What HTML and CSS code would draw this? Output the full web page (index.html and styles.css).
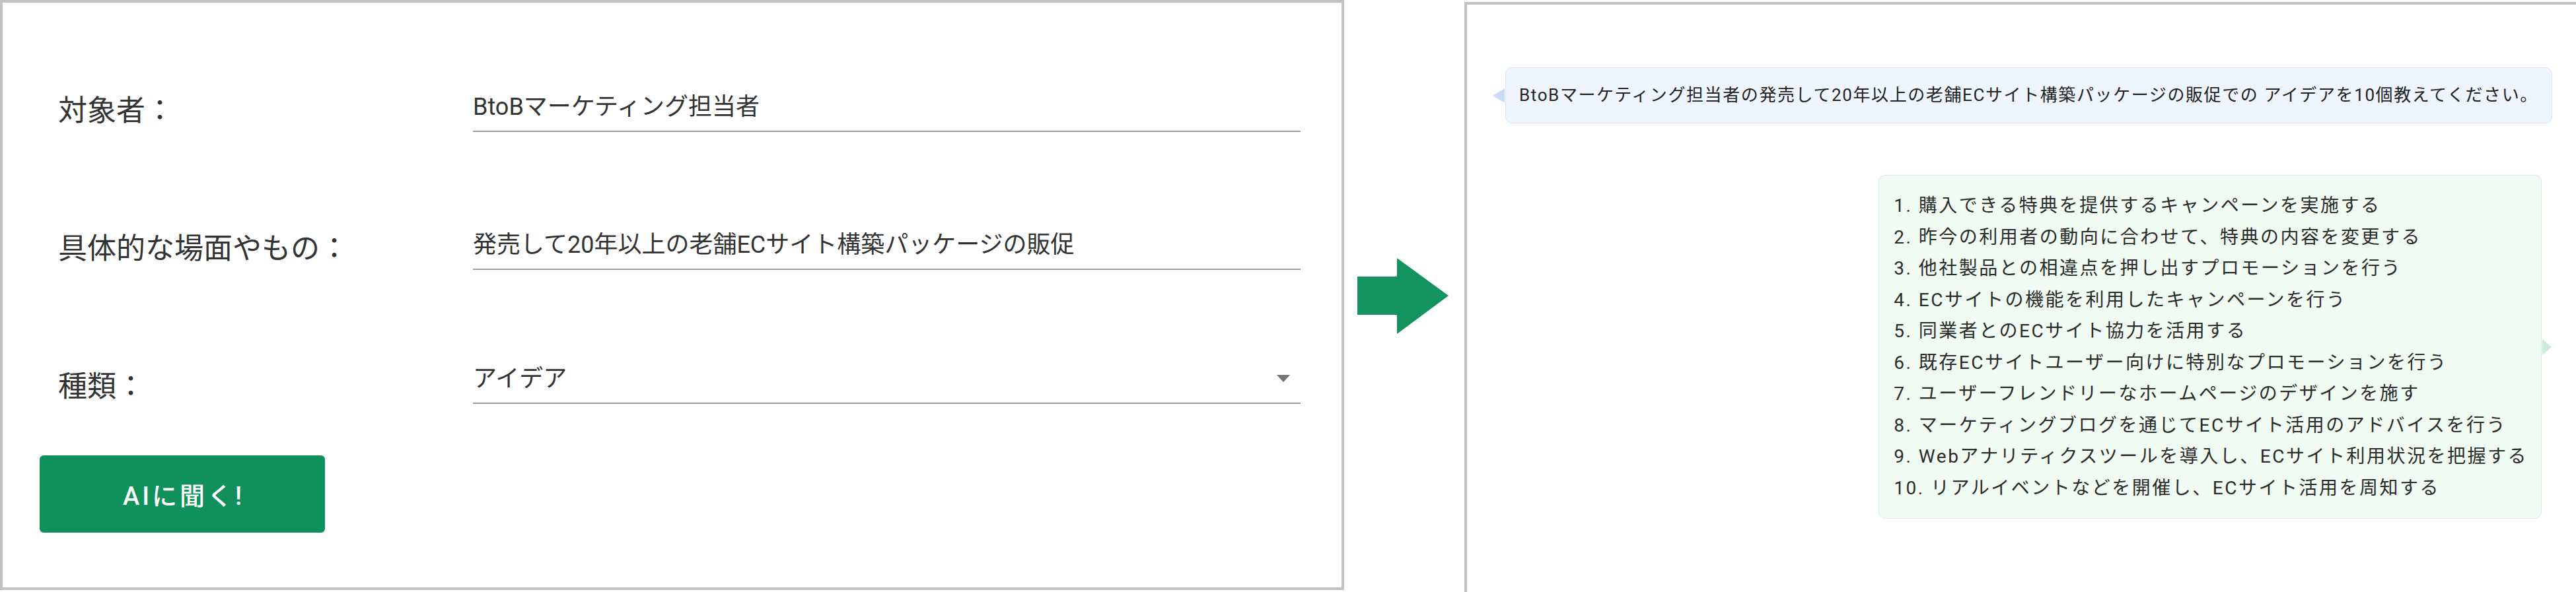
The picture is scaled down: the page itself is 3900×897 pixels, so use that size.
FILE: index.html
```html
<!DOCTYPE html>
<html lang="ja">
<head>
<meta charset="utf-8">
<title>AIに聞く</title>
<link rel="stylesheet" href="styles.css">
</head>
<body>
<div class="page">
  <section class="panel form-panel">
    <div class="form-row">
      <div class="label">対象者：</div>
      <div class="field">BtoBマーケティング担当者</div>
    </div>
    <div class="form-row">
      <div class="label">具体的な場面やもの：</div>
      <div class="field">発売して20年以上の老舗ECサイト構築パッケージの販促</div>
    </div>
    <div class="form-row">
      <div class="label">種類：</div>
      <div class="field field-select"><span>アイデア</span><span class="caret"></span></div>
    </div>
    <button class="ask-btn" type="button">AIに聞く!</button>
  </section>

  <div class="arrow">
    <svg width="138" height="115" viewBox="0 0 138 115"><polygon points="0,28 60,28 60,0 138,57 60,115 60,86 0,86"/></svg>
  </div>

  <section class="panel chat-panel">
    <div class="bubble bubble-user">BtoBマーケティング担当者の発売して20年以上の老舗ECサイト構築パッケージの販促での アイデアを10個教えてください。</div>
    <div class="bubble bubble-ai">
      <ol class="ideas">
        <li>1. 購入できる特典を提供するキャンペーンを実施する</li>
        <li>2. 昨今の利用者の動向に合わせて、特典の内容を変更する</li>
        <li>3. 他社製品との相違点を押し出すプロモーションを行う</li>
        <li>4. ECサイトの機能を利用したキャンペーンを行う</li>
        <li>5. 同業者とのECサイト協力を活用する</li>
        <li>6. 既存ECサイトユーザー向けに特別なプロモーションを行う</li>
        <li>7. ユーザーフレンドリーなホームページのデザインを施す</li>
        <li>8. マーケティングブログを通じてECサイト活用のアドバイスを行う</li>
        <li>9. Webアナリティクスツールを導入し、ECサイト利用状況を把握する</li>
        <li>10. リアルイベントなどを開催し、ECサイト活用を周知する</li>
      </ol>
    </div>
  </section>
</div>
</body>
</html>
```

FILE: styles.css
```css
html, body {
  margin: 0;
  padding: 0;
  overflow: hidden;
  background: #ffffff;
}

body {
  font-family: Roboto, "Noto Sans CJK JP", sans-serif;
  color: #333333;
}

.page {
  display: flex;
  align-items: flex-start;
  height: 897px;
}

.panel {
  box-sizing: border-box;
  border: 4px solid #c2c2c2;
  background: #ffffff;
}

/* ---------- left: form ---------- */
.form-panel {
  flex: none;
  width: 2035px;
  height: 894px;
  padding-top: 59px;
}

.form-row {
  display: flex;
  align-items: center;
  height: 209px;
  padding-left: 84px;
}

.label {
  flex: none;
  width: 628px;
  font-size: 44px;
  line-height: 60px;
  color: #333333;
}

.field {
  box-sizing: border-box;
  width: 1253px;
  font-size: 36px;
  line-height: 52px;
  padding-bottom: 10px;
  border-bottom: 2px solid #9c9c9c;
  color: #333333;
  white-space: nowrap;
}

.field-select {
  display: flex;
  justify-content: space-between;
  align-items: center;
  margin-bottom: 12px;
  padding-right: 16px;
}

.caret {
  width: 0;
  height: 0;
  border-left: 10px solid transparent;
  border-right: 10px solid transparent;
  border-top: 11px solid #767676;
}

.ask-btn {
  display: block;
  box-sizing: border-box;
  margin-left: 56px;
  width: 432px;
  height: 117px;
  padding: 0 0 0 4px;
  border: none;
  border-radius: 6px;
  background: #10915c;
  color: #ffffff;
  font-family: Roboto, "Noto Sans CJK JP", sans-serif;
  font-size: 38px;
  font-weight: 500;
  letter-spacing: 4px;
}

/* ---------- arrow ---------- */
.arrow {
  flex: none;
  align-self: center;
  margin: 0 24px 0 20px;
}

.arrow svg {
  display: block;
  fill: #13945e;
}

/* ---------- right: chat ---------- */
.chat-panel {
  flex: 1;
  display: flex;
  flex-direction: column;
  height: 930px;
  margin-top: 3px;
  margin-right: 4px;
  padding: 95px 40px 0 58px;
}

.bubble {
  position: relative;
  box-sizing: border-box;
  border-radius: 10px;
}

.bubble-user {
  background: #eef5ff;
  border: 1px solid #dde5ef;
  padding: 23px 20px;
  font-size: 26px;
  line-height: 37px;
  letter-spacing: 1.6px;
  white-space: nowrap;
  color: #222222;
}

.bubble-user::before {
  content: "";
  position: absolute;
  left: -20px;
  top: 50%;
  transform: translateY(-50%);
  border-top: 11px solid transparent;
  border-bottom: 11px solid transparent;
  border-right: 18px solid #c7dcfa;
}

.bubble-ai {
  align-self: flex-end;
  margin-top: 78px;
  margin-right: 16px;
  background: #effbf3;
  border: 1px solid #e0ebe4;
  padding: 22px 20px 22px 22px;
  font-size: 28px;
  line-height: 47.5px;
  letter-spacing: 2.5px;
  color: #2b2b2b;
}

.bubble-ai::after {
  content: "";
  position: absolute;
  right: -16px;
  top: 50%;
  transform: translateY(-50%);
  border-top: 12px solid transparent;
  border-bottom: 12px solid transparent;
  border-left: 14px solid #c6efd6;
}

.ideas {
  list-style: none;
  margin: 0;
  padding: 0;
  white-space: nowrap;
}
```
